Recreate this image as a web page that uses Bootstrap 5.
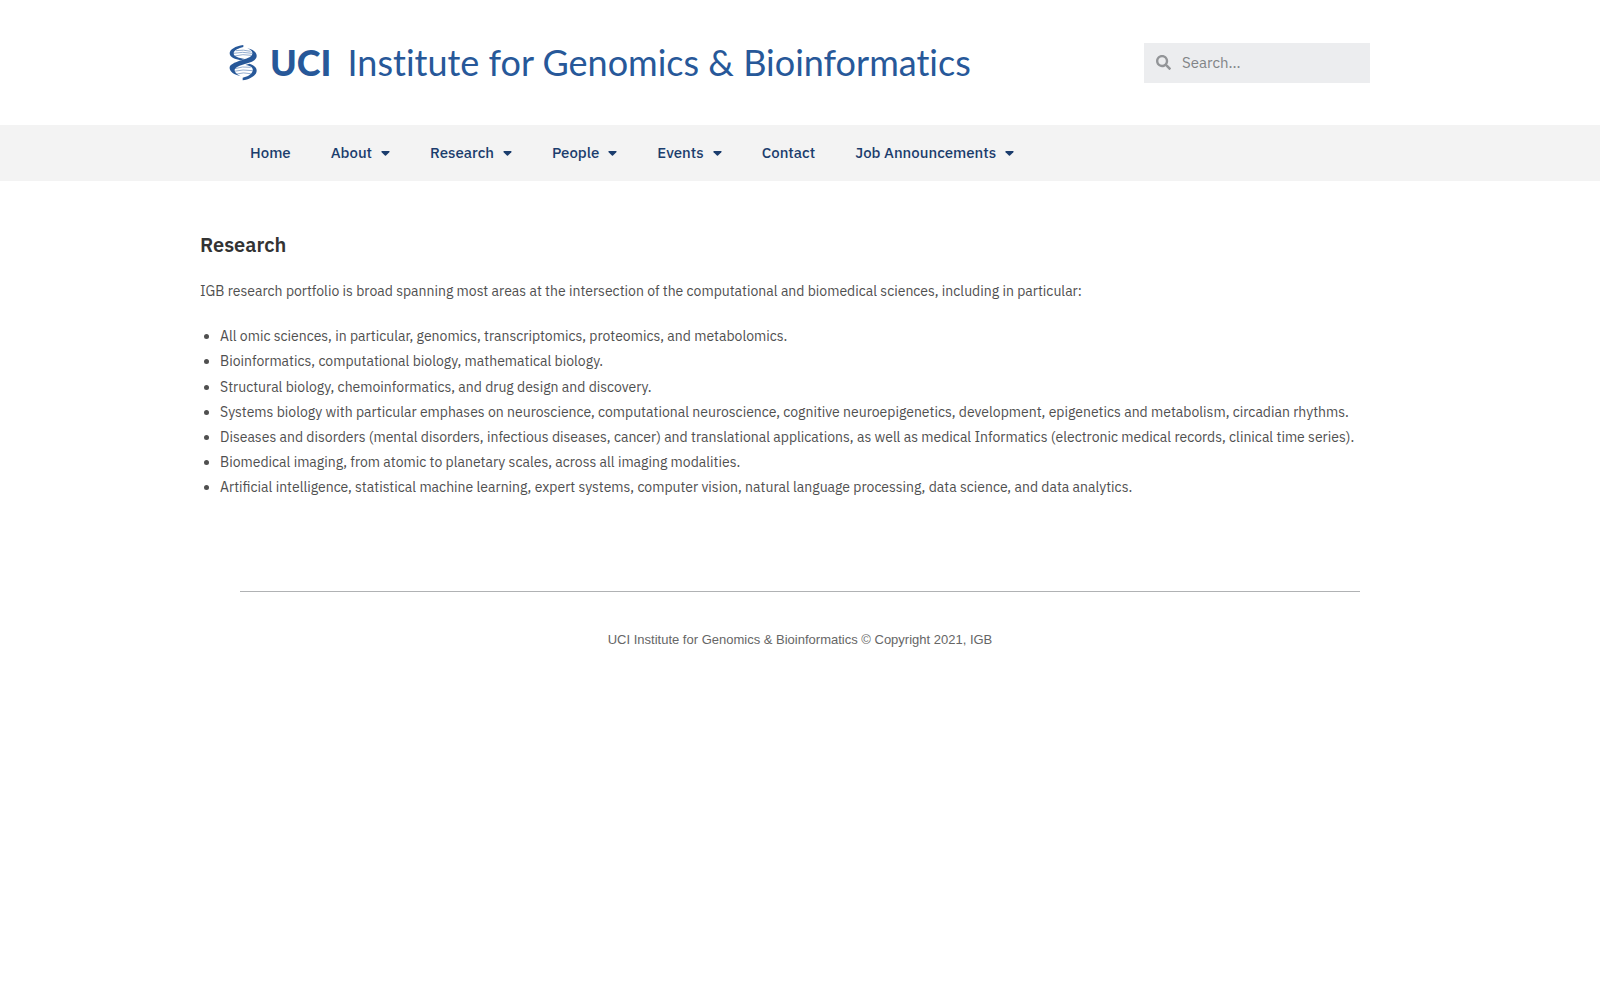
<!DOCTYPE html>
<html lang="en">
<head>
<meta charset="utf-8">
<meta name="viewport" content="width=device-width, initial-scale=1">
<title>Research – UCI Institute for Genomics &amp; Bioinformatics</title>
<link href="https://cdn.jsdelivr.net/npm/bootstrap@5.3.0/dist/css/bootstrap.min.css" rel="stylesheet">
<style>
  body { font-family: "IBM Plex Sans", Roboto, "Noto Sans", sans-serif; font-size: 14px; line-height: 1.8; color: #505050; background: #fff; }
  .site-wrap { max-width: 1200px; }
  .site-head { min-height: 125px; padding: 0 30px 0 28px; }
  .brand-link { color: #275899; font-family: Lato, sans-serif; font-size: 36px; line-height: 44px; gap: 12px; font-variant-ligatures: none; }
  .brand-link strong { font-weight: 900; }
  .brand-link svg { width: 30px; height: 38px; }
  .brand-words { gap: 16px; padding-bottom: 2px; }
  .search-box { width: 226px; height: 40px; background: #ecedef; color: #939598; padding: 0 12px; gap: 11px; }
  .search-box .form-control { font-size: 15px; line-height: 24px; color: #55595c; }
  .search-box .form-control::placeholder { color: #818487; opacity: 1; }
  .main-nav { background: #f3f3f3; }
  .main-nav .nav { padding: 0 30px; }
  .main-nav .nav-link { color: #1b3d6d; font-size: 15px; font-weight: 500; line-height: 20px; padding: 18px 20px; gap: 9px; }
  .page-title { font-size: 20px; line-height: 30px; font-weight: 600; color: #333; margin-bottom: 19px; }
  .page-body { padding-top: 49px; padding-bottom: 90px; }
  .topic-list { padding-left: 20px; }
  .foot-rule { margin: 0 40px 35px; border-top: 1px solid #b0b2b4; opacity: 1; }
  .foot-text { font-family: "Liberation Sans", Arial, sans-serif; font-size: 13px; line-height: 25px; color: #666; }
</style>
<script src="https://cdn.jsdelivr.net/npm/bootstrap@5.3.0/dist/js/bootstrap.bundle.min.js" defer></script>
</head>
<body>
<svg class="d-none" aria-hidden="true"><symbol id="caret" viewBox="0 0 10 6"><path d="M1 0h8c.9 0 1.200.8.6 1.400l-4 4c-.4.4-.9.4-1.300 0l-4-4C-.2.8.100 0 1 0z" fill="currentColor"/></symbol></svg>
<header class="site-wrap site-head mx-auto d-flex flex-wrap align-items-center justify-content-between">
  <a class="brand-link d-flex align-items-center text-decoration-none" href="#">
    <svg viewBox="0 0 90 114" fill="none" aria-hidden="true">
      <path stroke="#7e9cc5" stroke-width="2.500" d="M24 20Q46 16 68 22M16 28Q44 22 72 28M20 36Q44 29 70 34M20 74Q44 66 68 70M18 82Q44 75 74 80M26 90Q46 84 68 89"/>
      <g fill="currentColor">
        <path d="M46 3C22 6 5 17 5 28C5 40 22 46 38 49L50 45C30 42 16 37 17 27C18 19 32 12 46 9Z"/>
        <path d="M58 13C72 19 77 27 70 35C60 47 8 52 5 70C3 82 17 92 38 97C20 88 17 80 22 73C34 58 84 60 86 37C87 24 74 16 58 13Z"/>
        <path d="M52 63C70 66 76 72 74 80C71 92 56 98 44 101V109C66 106 86 94 86 80C86 70 76 63 64 59Z"/>
      </g>
    </svg>
    <span class="brand-words d-flex flex-wrap"><strong>UCI</strong><span>Institute for Genomics &amp; Bioinformatics</span></span>
  </a>
  <form class="search-box d-flex align-items-center" role="search">
    <label class="d-flex flex-shrink-0" for="site-search" aria-label="Search">
      <svg width="15" height="15" viewBox="0 0 512 512" fill="currentColor" aria-hidden="true"><path d="M505 442.700L405.300 343c-4.500-4.500-10.600-7-17-7H372c27.600-35.300 44-79.700 44-128C416 93.100 322.900 0 208 0S0 93.100 0 208s93.100 208 208 208c48.300 0 92.700-16.400 128-44v16.300c0 6.400 2.500 12.500 7 17l99.700 99.700c9.400 9.400 24.600 9.400 33.900 0l28.300-28.300c9.400-9.400 9.400-24.600.1-34zM208 336c-70.700 0-128-57.200-128-128 0-70.700 57.200-128 128-128 70.700 0 128 57.200 128 128 0 70.700-57.200 128-128 128z"/></svg>
    </label>
    <input class="form-control border-0 bg-transparent shadow-none p-0" id="site-search" type="search" placeholder="Search...">
  </form>
</header>
<nav class="main-nav" aria-label="Main">
  <ul class="nav site-wrap mx-auto">
    <li class="nav-item"><a class="nav-link" href="#">Home</a></li>
    <li class="nav-item"><a class="nav-link d-flex align-items-center" href="#">About<svg width="9" height="5"><use href="#caret"/></svg></a></li>
    <li class="nav-item"><a class="nav-link d-flex align-items-center" href="#">Research<svg width="9" height="5"><use href="#caret"/></svg></a></li>
    <li class="nav-item"><a class="nav-link d-flex align-items-center" href="#">People<svg width="9" height="5"><use href="#caret"/></svg></a></li>
    <li class="nav-item"><a class="nav-link d-flex align-items-center" href="#">Events<svg width="9" height="5"><use href="#caret"/></svg></a></li>
    <li class="nav-item"><a class="nav-link" href="#">Contact</a></li>
    <li class="nav-item"><a class="nav-link d-flex align-items-center" href="#">Job Announcements<svg width="9" height="5"><use href="#caret"/></svg></a></li>
  </ul>
</nav>
<main class="site-wrap page-body mx-auto">
  <h1 class="page-title">Research</h1>
  <p class="mb-0 pb-3">IGB research portfolio is broad spanning most areas at the intersection of the computational and biomedical sciences, including in particular:</p>
  <ul class="topic-list mt-1 mb-0">
    <li>All omic sciences, in particular, genomics, transcriptomics, proteomics, and metabolomics.</li>
    <li>Bioinformatics, computational biology, mathematical biology.</li>
    <li>Structural biology, chemoinformatics, and drug design and discovery.</li>
    <li>Systems biology with particular emphases on neuroscience, computational neuroscience, cognitive neuroepigenetics, development, epigenetics and metabolism, circadian rhythms.</li>
    <li>Diseases and disorders (mental disorders, infectious diseases, cancer) and translational applications, as well as medical Informatics (electronic medical records, clinical time series).</li>
    <li>Biomedical imaging, from atomic to planetary scales, across all imaging modalities.</li>
    <li>Artificial intelligence, statistical machine learning, expert systems, computer vision, natural language processing, data science, and data analytics.</li>
  </ul>
</main>
<footer class="site-wrap mx-auto">
  <hr class="foot-rule">
  <p class="foot-text text-center mb-4">UCI Institute for Genomics &amp; Bioinformatics © Copyright 2021, IGB</p>
</footer>
</body>
</html>
